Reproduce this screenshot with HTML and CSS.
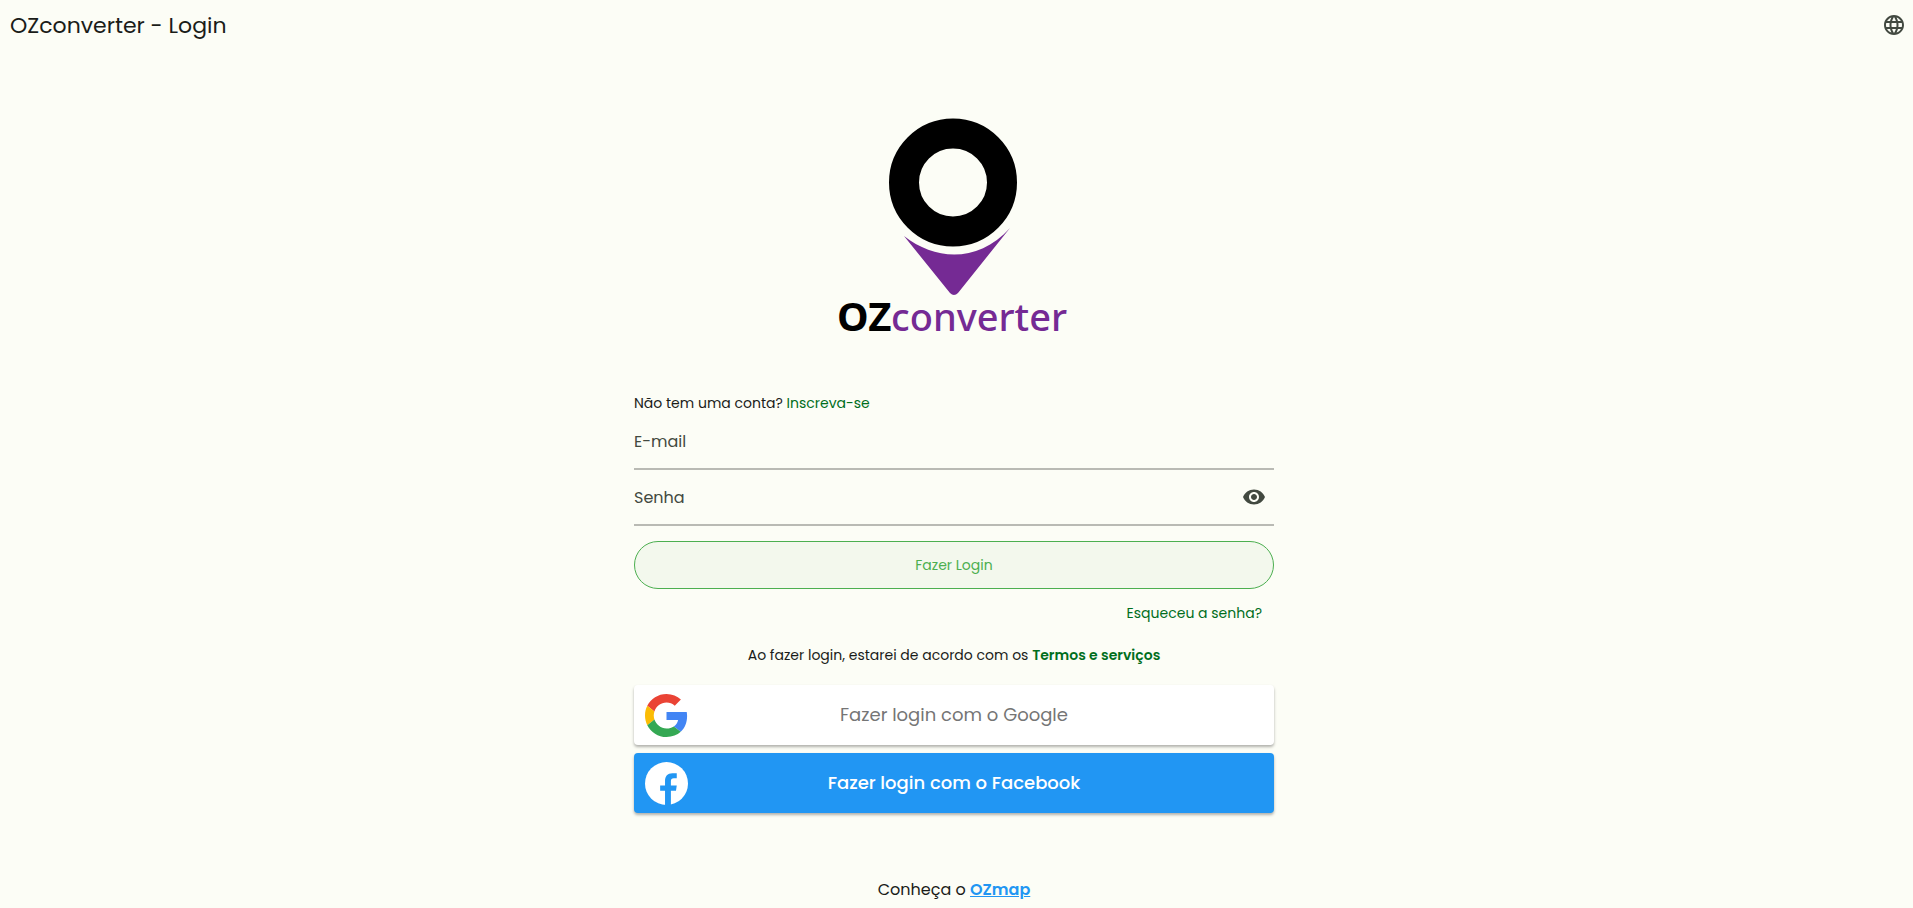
FILE: index.html
```html
<!DOCTYPE html>
<html lang="pt-BR">
<head>
<meta charset="utf-8">
<meta name="viewport" content="width=device-width, initial-scale=1">
<title>OZconverter - Login</title>
<link rel="stylesheet" href="styles.css">
</head>
<body>
<header class="topbar">
  <h1 class="topbar-title">OZconverter - Login</h1>
  <button class="icon-button" type="button" aria-label="Idioma">
    <svg width="24" height="24" viewBox="0 0 24 24" fill="currentColor" aria-hidden="true"><path d="M11.99 2C6.47 2 2 6.48 2 12s4.47 10 9.99 10C17.52 22 22 17.52 22 12S17.52 2 11.99 2zm6.93 6h-2.95c-.32-1.25-.78-2.45-1.38-3.56 1.84.63 3.37 1.91 4.33 3.56zM12 4.04c.83 1.2 1.48 2.53 1.91 3.96h-3.82c.43-1.43 1.08-2.76 1.91-3.96zM4.26 14C4.1 13.36 4 12.69 4 12s.1-1.36.26-2h3.38c-.08.66-.14 1.32-.14 2s.06 1.34.14 2H4.26zm.82 2h2.95c.32 1.25.78 2.45 1.38 3.56-1.84-.63-3.37-1.9-4.33-3.56zm2.95-8H5.08c.96-1.66 2.49-2.93 4.33-3.56C8.81 5.55 8.35 6.75 8.03 8zM12 19.96c-.83-1.2-1.48-2.53-1.91-3.96h3.82c-.43 1.43-1.08 2.76-1.91 3.96zM14.34 14H9.66c-.09-.66-.16-1.32-.16-2s.07-1.35.16-2h4.68c.09.65.16 1.32.16 2s-.07 1.34-.16 2zm.25 5.56c.6-1.11 1.06-2.31 1.38-3.56h2.95c-.96 1.65-2.49 2.93-4.33 3.56zM16.36 14c.08-.66.14-1.32.14-2s-.06-1.34-.14-2h3.38c.16.64.26 1.31.26 2s-.1 1.36-.26 2h-3.38z"/></svg>
  </button>
</header>
<main class="page">
  <svg class="logo" width="270" height="250" viewBox="0 0 270 250" role="img" aria-label="OZconverter">
    <circle cx="134" cy="82.500" r="49" fill="none" stroke="#000" stroke-width="30"/>
    <path d="M85 136C117 161 159 163 191 128L139 193Q135 197 131 193Z" fill="#752a94"/>
    <text class="logo-oz" x="18" y="231">OZ</text>
    <text class="logo-name" x="72" y="231">converter</text>
  </svg>
  <form class="login">
    <p class="signup">Não tem uma conta? <a href="#">Inscreva-se</a></p>
    <div class="field">
      <label for="email">E-mail</label>
      <input id="email" type="email">
    </div>
    <div class="field">
      <label for="senha">Senha</label>
      <input id="senha" type="password">
      <button class="icon-button" type="button" aria-label="Mostrar senha">
        <svg width="24" height="24" viewBox="0 0 24 24" fill="currentColor" aria-hidden="true"><path d="M12 4.5C7 4.5 2.73 7.61 1 12c1.73 4.39 6 7.5 11 7.5s9.27-3.11 11-7.5c-1.73-4.39-6-7.5-11-7.5zM12 17c-2.76 0-5-2.24-5-5s2.24-5 5-5 5 2.24 5 5-2.24 5-5 5zm0-8c-1.66 0-3 1.34-3 3s1.34 3 3 3 3-1.34 3-3-1.34-3-3-3z"/></svg>
      </button>
    </div>
    <button class="submit" type="submit">Fazer Login</button>
    <p class="forgot"><a href="#">Esqueceu a senha?</a></p>
    <p class="terms">Ao fazer login, estarei de acordo com os <a href="#">Termos e serviços</a></p>
    <button class="social google" type="button">
      <svg width="43" height="43" viewBox="0 0 48 48" aria-hidden="true"><path fill="#EA4335" d="M24 9.5c3.54 0 6.71 1.22 9.21 3.6l6.85-6.85C35.9 2.38 30.47 0 24 0 14.62 0 6.51 5.38 2.56 13.22l7.98 6.19C12.43 13.72 17.74 9.5 24 9.5z"/><path fill="#4285F4" d="M46.98 24.55c0-1.57-.15-3.09-.38-4.55H24v9.02h12.94c-.58 2.96-2.26 5.48-4.78 7.18l7.73 6c4.51-4.18 7.09-10.36 7.09-17.65z"/><path fill="#FBBC05" d="M10.53 28.59c-.48-1.45-.76-2.99-.76-4.59s.27-3.14.76-4.59l-7.98-6.19C.92 16.46 0 20.12 0 24c0 3.88.92 7.54 2.56 10.78l7.97-6.19z"/><path fill="#34A853" d="M24 48c6.48 0 11.93-2.13 15.89-5.81l-7.73-6c-2.15 1.45-4.92 2.3-8.16 2.3-6.26 0-11.57-4.22-13.47-9.91l-7.98 6.19C6.51 42.62 14.62 48 24 48z"/></svg>
      <span>Fazer login com o Google</span>
    </button>
    <button class="social facebook" type="button">
      <svg width="43" height="43" viewBox="0 0 44 44" aria-hidden="true"><circle cx="22" cy="22" r="22" fill="#fff"/><path fill="#2196f3" d="M20.500 44V29.500H15.500V24H20.500V19.500C20.500 14.500 23 11.500 28 11.500H32.500V16.500H29.500C27.300 16.500 26.500 17.500 26.500 19.500V24H32.500L31.700 29.500H26.500V44Z"/></svg>
      <span>Fazer login com o Facebook</span>
    </button>
  </form>
  <p class="about">Conheça o <a href="#">OZmap</a></p>
</main>
</body>
</html>
```
FILE: styles.css
```css
* { box-sizing: border-box; }
body {
  margin: 0;
  background: #fcfdf6;
  color: #1a1c19;
  font-family: Poppins, Inter, "Open Sans", sans-serif;
  font-size: 14px;
  line-height: 22px;
}
h1, p { margin: 0; }
a { color: #006e1c; text-decoration: none; }
button, input { font: inherit; }
button { cursor: pointer; }
.topbar {
  display: flex;
  align-items: center;
  justify-content: space-between;
  height: 50px;
  padding: 0 7px 0 10px;
}
.topbar-title { padding-top: 2px; font-size: 22px; font-weight: 400; }
.icon-button {
  display: flex;
  padding: 0;
  border: 0;
  background: none;
  color: #424940;
}
.page {
  display: flex;
  flex-direction: column;
  align-items: center;
  padding: 50px 5px 0 0;
}
.logo { max-width: 100%; }
.logo-oz, .logo-name { font-family: "Noto Sans", sans-serif; }
.logo-oz { font-size: 40px; font-weight: 700; }
.logo-name { font-size: 38px; font-weight: 500; fill: #752a94; }
.login {
  display: flex;
  flex-direction: column;
  width: 100%;
  max-width: 640px;
  margin-top: 42px;
}
.field {
  display: flex;
  align-items: center;
  gap: 8px;
  height: 56px;
  padding-right: 8px;
  border-bottom: 2px solid #b9bab4;
}
.field label { padding-top: 2px; color: #424940; font-size: 16px; }
.field input {
  flex: 1;
  min-width: 0;
  border: 0;
  outline: 0;
  background: none;
}
.submit {
  height: 48px;
  margin-top: 15px;
  border: 1px solid #4caf50;
  border-radius: 24px;
  background: #f3f8ed;
  color: #4caf50;
}
.forgot { padding: 13px 12px; text-align: right; }
.terms { padding: 7px 0; text-align: center; }
.terms a { font-weight: 600; }
.social {
  display: flex;
  align-items: center;
  height: 60px;
  margin-top: 12px;
  padding: 0 54px 0 11px;
  border: 0;
  border-radius: 4px;
  box-shadow: 0 2px 3px rgba(0, 0, 0, 0.3);
  font-size: 18px;
}
.social span { flex: 1; }
.google { background: #fff; color: #757575; }
.facebook { margin-top: 8px; background: #2196f3; color: #fff; font-weight: 500; }
.about { margin-top: 65px; font-size: 16px; line-height: 24px; }
.about a { color: #2196f3; font-weight: 600; text-decoration: underline; }
```
